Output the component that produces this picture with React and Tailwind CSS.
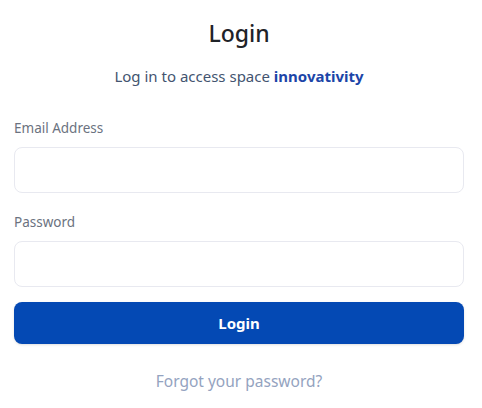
import React from 'react';

const App = () => {
  return (
    <div
      className="w-full min-h-[408px] bg-white pl-[14px] pr-[18px] pt-[18px] text-[#1f2937]"
      style={{ fontFamily: '"Noto Sans", "Open Sans", sans-serif' }}
    >
      <h1 className="text-center text-[23px] leading-[30px] font-medium text-[#1f2328]">Login</h1>
      <p className="mt-[18px] text-center text-[15px] leading-[20px] text-[#435470]">
        Log in to access space <span className="font-bold text-[#1c45a8]">innovativity</span>
      </p>

      <form className="mt-[33px]" onSubmit={(e) => e.preventDefault()}>
        <label className="block text-[13.5px] leading-[18px] text-[#6b7280]">Email Address</label>
        <input
          type="email"
          className="mt-[10px] block w-full h-[46px] rounded-[8px] border border-[#e8e9f0] bg-white px-3 outline-none"
        />

        <label className="mt-[20px] block text-[13.5px] leading-[18px] text-[#6b7280]">Password</label>
        <input
          type="password"
          className="mt-[10px] block w-full h-[46px] rounded-[8px] border border-[#e8e9f0] bg-white px-3 outline-none"
        />

        <button
          type="submit"
          className="mt-[15px] block w-full h-[42px] rounded-[8px] bg-[#0449b4] text-white text-[15px] font-bold shadow-sm"
        >
          Login
        </button>
      </form>

      <p className="mt-[27px] text-center text-[15.5px] leading-[20px] text-[#94a3c0]">Forgot your password?</p>
    </div>
  );
};

export default App;
